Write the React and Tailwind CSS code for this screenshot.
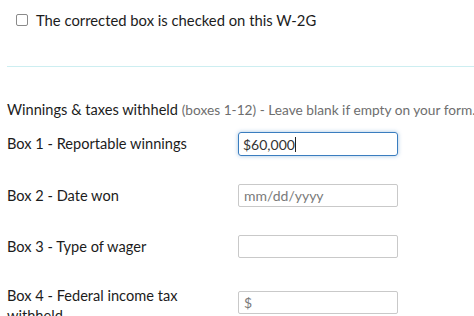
import React from 'react'

const font = { fontFamily: 'Lato, "Noto Sans", sans-serif' }

function Row({ label, children, className = '', labelClass = '' }) {
  return (
    <div className={`flex items-center ${className}`}>
      <div className={`w-[231px] shrink-0 pr-8 text-[14.6px] leading-[20px] text-[#1c1c1c] ${labelClass}`}>{label}</div>
      {children}
    </div>
  )
}

function Field({ placeholder }) {
  return (
    <input
      readOnly
      placeholder={placeholder}
      className="w-[160px] h-[23px] border border-[#c9c9c9] rounded-[2px] px-[5px] text-[14px] text-[#333] placeholder:text-[#7a7a7a] outline-none bg-white"
    />
  )
}

export default function App() {
  return (
    <div className="w-[474px] h-[316px] overflow-hidden bg-white" style={font}>
      {/* Corrected checkbox */}
      <div className="flex items-center gap-2 pl-4 pt-[10px] h-[30px]">
        <span className="w-[12px] h-[12px] border border-[#8a8a8a] rounded-[2px] bg-white shrink-0" />
        <span className="text-[14.8px] text-[#1c1c1c]">The corrected box is checked on this W-2G</span>
      </div>

      <div className="ml-[7px] mt-[36px] border-t border-[#cdeef1]" />

      <div className="pl-[7px] pt-[34px]">
        <p className="text-[14.6px] leading-[18px] text-[#1c1c1c] whitespace-nowrap">
          Winnings &amp; taxes withheld{' '}
          <span className="text-[13.7px] text-[#6e6e6e]">(boxes 1-12) - Leave blank if empty on your form.</span>
        </p>

        <div className="mt-[13px] flex flex-col gap-[28px]">
          <Row label="Box 1 - Reportable winnings">
            <div className="w-[160px] h-[24px] border border-[#3a7dbf] rounded-[3px] shadow-[0_0_4px_rgba(58,125,191,0.45)] px-[4px] flex items-center text-[14px] text-[#333]">
              $60,000<span className="w-px h-[15px] bg-[#222]" />
            </div>
          </Row>
          <Row label="Box 2 - Date won">
            <Field placeholder="mm/dd/yyyy" />
          </Row>
          <Row label="Box 3 - Type of wager">
            <Field placeholder="" />
          </Row>
          <Row label="Box 4 - Federal income tax withheld" className="-mt-[8px]" labelClass="pt-[8px]">
            <Field placeholder="$" />
          </Row>
        </div>
      </div>
    </div>
  )
}
